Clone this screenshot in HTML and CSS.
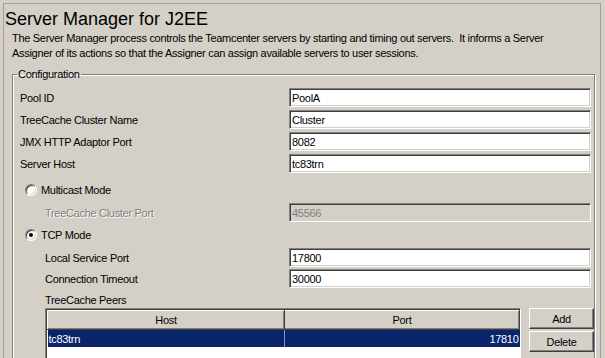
FILE: index.html
```html
<!DOCTYPE html>
<html lang="en">
<head>
    <meta charset="UTF-8">
    <meta name="viewport" content="width=device-width, initial-scale=1.0">
    <title>Server Manager for J2EE</title>
    <link rel="stylesheet" href="styles.css">
</head>
<body>
    <div class="frame">
        <h1>Server Manager for J2EE</h1>
        <p class="intro">The Server Manager process controls the Teamcenter servers by starting and timing out servers.&nbsp; It informs a Server<br>Assigner of its actions so that the Assigner can assign available servers to user sessions.</p>

        <fieldset class="config">
            <legend>Configuration</legend>
            <div class="config-body">
                <div class="rows">
                    <div class="row">
                        <label for="poolId">Pool ID</label>
                        <input type="text" id="poolId" value="PoolA">
                    </div>
                    <div class="row">
                        <label for="clusterName">TreeCache Cluster Name</label>
                        <input type="text" id="clusterName" value="Cluster">
                    </div>
                    <div class="row">
                        <label for="jmxPort">JMX HTTP Adaptor Port</label>
                        <input type="text" id="jmxPort" value="8082">
                    </div>
                    <div class="row">
                        <label for="serverHost">Server Host</label>
                        <input type="text" id="serverHost" value="tc83trn">
                    </div>
                </div>

                <div class="radio-row multicast">
                    <span class="radio"></span>Multicast Mode
                </div>
                <div class="rows sub cluster-port">
                    <div class="row disabled">
                        <label for="clusterPort">TreeCache Cluster Port</label>
                        <input type="text" id="clusterPort" value="45566" disabled>
                    </div>
                </div>

                <div class="radio-row tcp">
                    <span class="radio checked"></span>TCP Mode
                </div>
                <div class="rows sub tcp-fields">
                    <div class="row">
                        <label for="localPort">Local Service Port</label>
                        <input type="text" id="localPort" value="17800">
                    </div>
                    <div class="row">
                        <label for="timeout">Connection Timeout</label>
                        <input type="text" id="timeout" value="30000">
                    </div>
                </div>

                <div class="sub peers-label">TreeCache Peers</div>
                <div class="sub peers">
                    <div class="peer-box">
                        <table class="peer-table">
                            <colgroup>
                                <col class="host-col">
                                <col>
                            </colgroup>
                            <thead>
                                <tr><th>Host</th><th>Port</th></tr>
                            </thead>
                            <tbody>
                                <tr class="selected"><td>tc83trn</td><td class="port">17810</td></tr>
                            </tbody>
                        </table>
                    </div>
                    <div class="peer-buttons">
                        <button type="button">Add</button>
                        <button type="button">Delete</button>
                    </div>
                </div>
            </div>
        </fieldset>
    </div>
</body>
</html>
```

FILE: styles.css
```css
body {
    margin: 0;
    background-color: #d4d0c8;
    font-family: 'Liberation Sans', Arial, sans-serif;
    font-size: 11px;
    letter-spacing: -0.3px;
    color: #000;
    overflow: hidden;
}

.frame {
    margin: 3px 4px 0 3px;
    height: 420px;
    border-top: 1px solid #a0a0a0;
    border-left: 1px solid #a0a0a0;
    border-right: 1px solid #a0a0a0;
}

h1 {
    margin: 0;
    padding: 4px 0 0 1px;
    font-size: 18px;
    line-height: 22px;
    font-weight: normal;
    letter-spacing: 0;
}

.intro {
    margin: 1px 0 0 8px;
    line-height: 15px;
}

.config {
    margin: 6px 5px 0 8px;
    padding: 0;
    min-width: 0;
    border: 1px solid #808080;
    box-shadow: inset 1px 1px 0 #fff, 1px 1px 0 #fff;
}

.config legend {
    margin-left: 4px;
    padding: 0 1px;
    line-height: 14px;
}

.config-body {
    padding: 7px 3px 0 7px;
}

.rows {
    display: flex;
    flex-direction: column;
    gap: 3px;
}

.row {
    display: flex;
    align-items: center;
    height: 19px;
}

.row label {
    flex: 1;
}

.row input {
    width: 302px;
    height: 19px;
    box-sizing: border-box;
    margin: 0;
    padding: 0 2px;
    font: inherit;
    letter-spacing: inherit;
    color: #000;
    background-color: #fff;
    border-top: 1px solid #808080;
    border-left: 1px solid #808080;
    border-right: 1px solid #fff;
    border-bottom: 1px solid #fff;
    box-shadow: inset 1px 1px 0 #404040, inset -1px -1px 0 #d4d0c8;
    outline: none;
}

.row.disabled label {
    color: #808080;
    text-shadow: 1px 1px 0 #fff;
}

.row.disabled input {
    background-color: #d4d0c8;
    color: #808080;
}

.sub {
    padding-left: 25px;
}

.radio-row {
    display: flex;
    align-items: center;
    height: 16px;
    padding-left: 5px;
}

.multicast {
    margin-top: 9px;
}

.cluster-port {
    margin-top: 5px;
}

.tcp {
    margin-top: 5px;
}

.tcp-fields {
    margin-top: 5px;
    gap: 2px;
}

.radio {
    position: relative;
    width: 12px;
    height: 12px;
    box-sizing: border-box;
    margin-right: 4px;
    border-radius: 50%;
    background-color: #fff;
    border: 1px solid;
    border-color: #808080 #fff #fff #808080;
    box-shadow: inset 1px 1px 0 #404040, inset -1px -1px 0 #d4d0c8;
}

.radio.checked::after {
    content: '';
    position: absolute;
    left: 3px;
    top: 3px;
    width: 4px;
    height: 4px;
    border-radius: 50%;
    background-color: #000;
}

.peers-label {
    margin-top: 5px;
    line-height: 14px;
}

.peers {
    display: flex;
    gap: 8px;
    margin-top: 1px;
}

.peer-box {
    flex-shrink: 0;
    width: 476px;
    height: 80px;
    box-sizing: border-box;
    background-color: #fff;
    border-top: 1px solid #808080;
    border-left: 1px solid #808080;
    border-right: 1px solid #fff;
    border-bottom: 1px solid #fff;
    box-shadow: inset 1px 1px 0 #404040;
    padding: 1px 0 0 1px;
}

.peer-table {
    width: 100%;
    border-collapse: collapse;
    table-layout: fixed;
}

.host-col {
    width: 237px;
}

.peer-table th {
    height: 19px;
    box-sizing: border-box;
    padding: 0;
    font-weight: normal;
    text-align: center;
    background-color: #d4d0c8;
    border-top: 1px solid #fff;
    border-left: 1px solid #fff;
    border-right: 1px solid #404040;
    border-bottom: 1px solid #404040;
    box-shadow: inset -1px -1px 0 #808080;
}

.peer-table td {
    height: 17px;
    padding: 0 1px;
    white-space: nowrap;
}

.peer-table .selected td {
    background-color: #0a246a;
    color: #fff;
}

.peer-table .selected td + td {
    border-left: 1px solid #8a95b5;
}

.peer-table .port {
    text-align: right;
}

.peer-buttons {
    flex-shrink: 0;
    display: flex;
    flex-direction: column;
    gap: 2px;
}

.peer-buttons button {
    width: 65px;
    height: 21px;
    margin: 0;
    padding: 0;
    font: inherit;
    letter-spacing: inherit;
    color: #000;
    background-color: #d4d0c8;
    border-top: 1px solid #fff;
    border-left: 1px solid #fff;
    border-right: 1px solid #404040;
    border-bottom: 1px solid #404040;
    box-shadow: inset -1px -1px 0 #808080;
}
```
